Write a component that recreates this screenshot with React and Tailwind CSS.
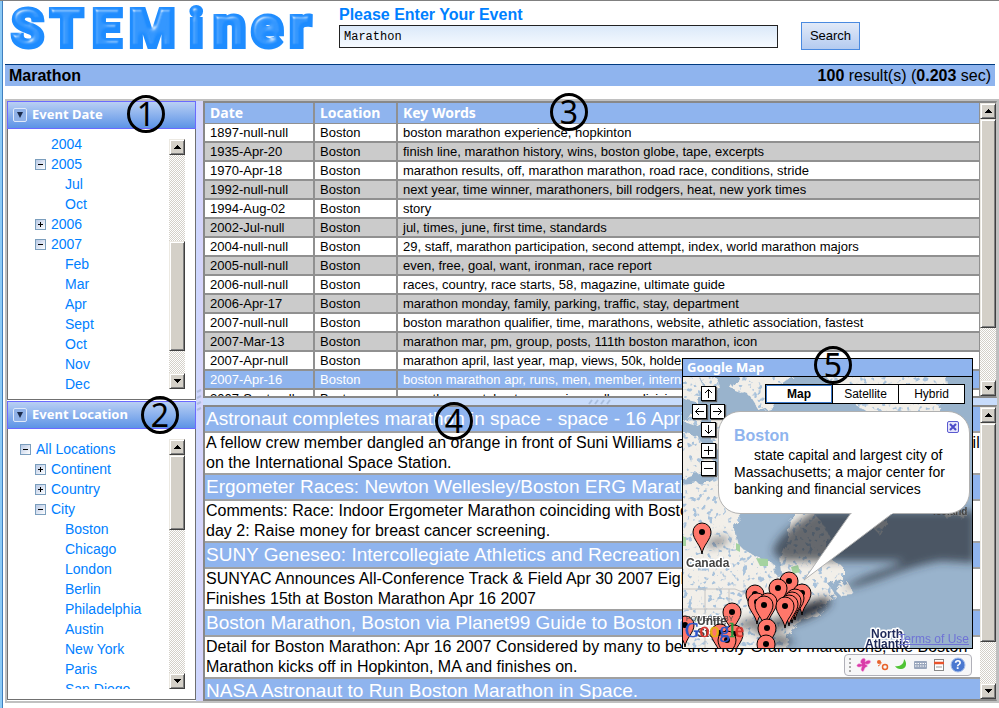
import React from "react";

const rows = [
  ["1897-null-null", "boston marathon experience, hopkinton"],
  ["1935-Apr-20", "finish line, marathon history, wins, boston globe, tape, excerpts"],
  ["1970-Apr-18", "marathon results, off, marathon marathon, road race, conditions, stride"],
  ["1992-null-null", "next year, time winner, marathoners, bill rodgers, heat, new york times"],
  ["1994-Aug-02", "story"],
  ["2002-Jul-null", "jul, times, june, first time, standards"],
  ["2004-null-null", "29, staff, marathon participation, second attempt, index, world marathon majors"],
  ["2005-null-null", "even, free, goal, want, ironman, race report"],
  ["2006-null-null", "races, country, race starts, 58, magazine, ultimate guide"],
  ["2006-Apr-17", "marathon monday, family, parking, traffic, stay, department"],
  ["2007-null-null", "boston marathon qualifier, time, marathons, website, athletic association, fastest"],
  ["2007-Mar-13", "marathon mar, pm, group, posts, 111th boston marathon, icon"],
  ["2007-Apr-null", "marathon april, last year, map, views, 50k, holder"],
  ["2007-Apr-16", "boston marathon apr, runs, men, member, international"],
  ["2007-Sept-null", "marathon sept, boston, running, college, division, head"],
];

const results = [
  ["Astronaut completes marathon in space - space - 16 April", "A fellow crew member dangled an orange in front of Suni Williams as she ran a whole marathon on a treadmill", "on the International Space Station."],
  ["Ergometer Races: Newton Wellesley/Boston ERG Marathon", "Comments: Race: Indoor Ergometer Marathon coinciding with Boston Marathon, held on that very same day", "day 2: Raise money for breast cancer screening."],
  ["SUNY Geneseo: Intercollegiate Athletics and Recreation", "SUNYAC Announces All-Conference Track & Field Apr 30 2007 Eighth", "Finishes 15th at Boston Marathon Apr 16 2007"],
  ["Boston Marathon, Boston via Planet99 Guide to Boston rr", "Detail for Boston Marathon: Apr 16 2007 Considered by many to be the Holy Grail of marathons, the Boston", "Marathon kicks off in Hopkinton, MA and finishes on."],
  ["NASA Astronaut to Run Boston Marathon in Space.", "", ""],
];

const dates = [
  [1, "2004", ""], [1, "2005", "-"], [2, "Jul"], [2, "Oct"], [1, "2006", "+"], [1, "2007", "-"],
  [2, "Feb"], [2, "Mar"], [2, "Apr"], [2, "Sept"], [2, "Oct"], [2, "Nov"], [2, "Dec"],
];
const places = [
  [0, "All Locations", "-"], [1, "Continent", "+"], [1, "Country", "+"], [1, "City", "-"],
  [2, "Boston"], [2, "Chicago"], [2, "London"], [2, "Berlin"], [2, "Philadelphia"], [2, "Austin"],
  [2, "New York"], [2, "Paris"], [2, "San Diego"],
];

const bevel = "border border-t-[#ece9e2] border-l-[#ece9e2] border-r-[#404040] border-b-[#404040] bg-[#d4d0c8] shadow-[inset_1px_1px_0_#fff,inset_-1px_-1px_0_#808080]";

function ScrollButton({ down }) {
  return (
    <button aria-label={down ? "Scroll down" : "Scroll up"} className={"flex h-4 w-full shrink-0 items-center justify-center " + bevel}>
      <svg width="7" height="4" viewBox="0 0 7 4" shapeRendering="crispEdges">
        <path d={down ? "M0 0H7L3.5 4Z" : "M0 4H7L3.5 0Z"} />
      </svg>
    </button>
  );
}

function ScrollBar({ before, thumb }) {
  return (
    <div className="flex w-4 shrink-0 flex-col bg-[repeating-conic-gradient(#d4d0c8_0_25%,#ffffff_0_50%)] bg-[length:2px_2px]">
      <ScrollButton />
      <div style={{ flexGrow: before }} />
      <div className={bevel} style={{ flexGrow: thumb }} />
      <div style={{ flexGrow: 100 - before - thumb }} />
      <ScrollButton down />
    </div>
  );
}

const indents = ["pl-3", "pl-[27px]", "pl-[57px]"];

function Toggle({ sign }) {
  if (sign === "") return <span className="w-[11px]" />;
  return (
    <button aria-label={sign === "+" ? "Expand" : "Collapse"} className="h-[11px] w-[11px] border border-[#7b9ebd] bg-linear-to-br from-[#b8c8e4] to-white">
      <svg width="9" height="9" viewBox="0 0 9 9" shapeRendering="crispEdges">
        <path d={sign === "+" ? "M2 4.5H7M4.5 2V7" : "M2 4.5H7"} stroke="#000" />
      </svg>
    </button>
  );
}

function TreePanel({ title, items, before, thumb, align }) {
  return (
    <section className="flex min-h-0 flex-1 flex-col">
      <h2 className="flex h-7 shrink-0 items-center gap-[5px] border border-[#6a6aff] bg-linear-to-b from-[#b9cff3] to-[#5c93e6] pl-[5px] font-['Noto_Sans'] text-[13px] font-bold text-white">
        <button aria-label={"Collapse " + title} className="flex h-[14px] w-[14px] items-center justify-center rounded-xs border border-[#dfe9fa] bg-[#8fb1e8]">
          <svg width="6" height="6" viewBox="0 0 6 6"><path d="M0 0H6L3 6Z" fill="#1a2a4a" /></svg>
        </button>
        {title}
      </h2>
      <div className="mb-px flex min-h-0 flex-1 border border-t-0 border-[#707070] bg-white py-[10px] pr-[10px]">
        <ul className={"flex min-h-0 flex-1 flex-col overflow-hidden " + align}>
          {items.map(([level, name, sign], i) => (
            <li key={i} className={"flex h-5 shrink-0 items-center gap-[5px] " + indents[level]}>
              {level < 2 && <Toggle sign={sign} />}
              <a href="#" className="text-sm text-[#0080ff]">{name}</a>
            </li>
          ))}
        </ul>
        <ScrollBar before={before} thumb={thumb} />
      </div>
    </section>
  );
}

function Pin({ x, y }) {
  return (
    <g transform={`translate(${x} ${y})`}>
      <path d="M0 22C-1 13-9 8-9 0A9 9 0 0 1 9 0C9 8 1 13 0 22Z" fill="#ff776b" stroke="#000" />
      <circle r="3" />
    </g>
  );
}

const pins = [
  [19, 155], [106, 204], [95, 211], [72, 217], [119, 216], [74, 225], [85, 225], [81, 228], [112, 221],
  [109, 224], [106, 227], [102, 229], [49, 235], [84, 251], [83, 267], [2, 248], [37, 256], [51, 257], [44, 263],
];

function MapDrawing() {
  return (
    <svg className="block w-full" height="271" viewBox="0 0 289 271" preserveAspectRatio="xMinYMin slice" aria-hidden="true">
      <defs>
        <filter id="soft"><feGaussianBlur stdDeviation="4" /></filter>
        <filter id="rough" x="-5%" y="-5%" width="110%" height="110%" colorInterpolationFilters="sRGB">
          <feTurbulence type="fractalNoise" baseFrequency="0.12" numOctaves="3" seed="4" />
          <feDisplacementMap in="SourceGraphic" scale="9" result="land" />
          <feTurbulence type="fractalNoise" baseFrequency="0.2" numOctaves="2" seed="9" />
          <feColorMatrix values="0 0 0 0 0.66  0 0 0 0 0.76  0 0 0 0 0.86  9 0 0 0 -5.2" />
          <feComposite in2="land" operator="in" result="lakes" />
          <feMerge><feMergeNode in="land" /><feMergeNode in="lakes" /></feMerge>
        </filter>
      </defs>
      <rect width="290" height="271" fill="#99b3cc" />
      <g fill="#f2efe9" filter="url(#rough)">
        <path d="M-5 108L22 106L36 98L60 104L84 128L60 136L50 148L55 168L72 180L90 186L94 200L99 196L97 180L104 162L110 136L122 128L140 146L146 160L142 178L160 190L160 203L146 208L152 218L144 228L132 238L114 248L105 260L104 276H-5Z" />
        <path d="M-5 55L14 58L22 72L34 86L30 94L12 98L-5 104Z" />
        <path d="M-5 -5H14L24 16L12 24L-5 20Z" />
        <path d="M14 -5H30L36 10L24 12Z" />
        <path d="M28 34L40 42L46 62L38 78L28 62Z" />
        <path d="M8 36L20 44L14 50L2 46Z" />
        <path d="M58 -5H118L96 10L90 30L76 34L66 18L48 12Z" />
        <path d="M140 -5H262L266 20L252 40L200 44L160 20Z" />
        <path d="M186 130L206 134L202 148L196 158L188 146Z" />
        <path d="M156 208L164 204L172 218L158 219L152 213Z" />
        <path d="M258 134H286V139L262 140Z" />
      </g>
      <g fill="#a5d3a0">
        <path d="M53 166l4 2v7l-4-2zM73 181l12 1v7h-8zM0 159l3 2v8h-3zM108 190l7-2 2 7-7 2zM12 240h5v5h-5z" />
      </g>
      <path d="M0 212H52L64 217M0 232H60M22 212V271M46 212V250M94 200L100 232" fill="none" stroke="#c4c4c4" />
      <path d="M58 214l12-3 8 6-8 3zM96 230l14-6 3 3-12 6z" fill="#99b3cc" />
      <g fill="#2a2f38" filter="url(#soft)">
        <path d="M90 176C92 160 112 146 132 134H292V186L258 184C220 190 190 208 160 212C180 196 210 192 220 184H100Z" opacity="0.7" />
        <ellipse cx="34" cy="165" rx="12" ry="3" opacity="0.7" transform="rotate(-15 34 165)" />
        <ellipse cx="92" cy="248" rx="22" ry="6" opacity="0.7" transform="rotate(-18 92 248)" />
        <ellipse cx="124" cy="234" rx="26" ry="7" opacity="1" transform="rotate(-25 124 234)" />
        <ellipse cx="68" cy="246" rx="14" ry="4" opacity="0.7" transform="rotate(-15 68 246)" />
        <ellipse cx="96" cy="264" rx="14" ry="5" opacity="0.7" />
      </g>
      <g fontFamily="Liberation Sans" fontWeight="bold" stroke="#fff" strokeWidth="3" paintOrder="stroke" strokeLinejoin="round">
        <text x="3" y="190" fontSize="12" fill="#444">Canada</text>
        <text x="14" y="248" fontSize="12" fill="#444">United</text>
        <text x="14" y="260" fontSize="12" fill="#444">States</text>
        <text x="204" y="261" fontSize="12" textAnchor="middle" fill="#1f2a5a">North</text>
        <text x="204" y="271" fontSize="12" textAnchor="middle" fill="#1f2a5a">Atlantic</text>
        <text x="250" y="138" fontSize="10" fill="#444" strokeWidth="0">Iceland</text>
      </g>
      {pins.map(([x, y], i) => <Pin key={i} x={x} y={y} />)}
      <text x="3" y="244" fontFamily="Liberation Sans" fontSize="7" fill="#444">POWERED BY</text>
      <text x="2" y="260" fontFamily="Liberation Serif" fontSize="20" strokeWidth="0.6">
        <tspan fill="#2a56c8" stroke="#2a56c8">G</tspan><tspan fill="#d4322c" stroke="#d4322c">o</tspan><tspan fill="#e5b112" stroke="#e5b112">o</tspan><tspan fill="#2a56c8" stroke="#2a56c8">g</tspan><tspan fill="#2b9a3e" stroke="#2b9a3e">l</tspan><tspan fill="#d4322c" stroke="#d4322c">e</tspan>
      </text>
      <path d="M168 130V136L121 203L210 136V130Z" fill="#fff" />
      <path d="M168 136L121 203L210 136" fill="none" stroke="#b0b0b0" />
    </svg>
  );
}

function MapButton({ label, d }) {
  return (
    <button aria-label={label} className="h-[15px] w-[15px] border border-black bg-white shadow-[1px_1px_1px_#555]">
      <svg width="13" height="13" viewBox="0 0 13 13" fill="none" stroke="#000"><path d={d} /></svg>
    </button>
  );
}

function MapWindow() {
  return (
    <section className="absolute right-[26px] bottom-[59px] w-[291px] border border-black bg-[#8fb4ee]">
      <h2 className="flex h-[18px] items-center border-b border-black pl-1 font-['Noto_Sans'] text-[13px] font-bold text-white">Google Map</h2>
      <div className="relative overflow-hidden">
        <MapDrawing />
        <div className="absolute top-[9px] left-[9px] flex w-[33px] flex-col items-center gap-[3px]">
          <MapButton label="Pan up" d="M6.500 11V2.500M3 6L6.500 2.500L10 6" />
          <div className="flex gap-[3px]">
            <MapButton label="Pan left" d="M11 6.500H2.500M6 3L2.500 6.500L6 10" />
            <MapButton label="Pan right" d="M2 6.500H10.500M7 3L10.500 6.500L7 10" />
          </div>
          <MapButton label="Pan down" d="M6.500 2V10.500M3 7L6.500 10.500L10 7" />
          <div className="flex flex-col gap-[3px] pt-[3px]">
            <MapButton label="Zoom in" d="M2 6.500H11M6.500 2V11" />
            <MapButton label="Zoom out" d="M2 6.500H11" />
          </div>
        </div>
        <div className="absolute top-[7px] right-[7px] grid w-[200px] grid-cols-3 border border-black bg-black text-xs">
          <button className="h-[18px] border border-[#3a78c8] bg-white font-bold">Map</button>
          <button className="ml-px h-[18px] bg-white">Satellite</button>
          <button className="ml-px h-[18px] bg-white">Hybrid</button>
        </div>
        <article className="absolute top-[34px] right-[2px] h-[103px] w-[252px] rounded-[22px] border border-[#b0b0b0] bg-white px-[15px] pt-[15px] text-sm leading-[17px]">
          <button aria-label="Close" className="absolute top-[9px] right-[10px] h-3 w-3 rounded-xs border border-[#5a5ad0] bg-[#e4e4fb]">
            <svg width="10" height="10" viewBox="0 0 10 10"><path d="M2 2L8 8M8 2L2 8" stroke="#4a4ac8" strokeWidth="2" /></svg>
          </button>
          <h3 className="mb-0.5 text-base leading-[18px] font-bold text-[#8fb4ee]">Boston</h3>
          <p className="indent-5">state capital and largest city of Massachusetts; a major center for banking and financial services</p>
        </article>
        <svg className="absolute top-[134px] left-[165px]" width="50" height="6" aria-hidden="true"><path d="M3.500 0H44.500V3H3.500Z" fill="#fff" /></svg>
        <a href="#" className="absolute right-[3px] bottom-[2px] text-xs leading-[14px] text-[#6f73d6] underline">Terms of Use</a>
      </div>
    </section>
  );
}

function LanguageBar() {
  return (
    <div className="absolute right-[27px] bottom-[32px] flex h-[22px] w-32 items-center rounded border border-[#b0b0b8] bg-[#f7f7f8] pl-1">
      <svg width="118" height="18" viewBox="0 0 118 18" aria-hidden="true">
        <path d="M1 2V17" stroke="#aaa" strokeWidth="2" strokeDasharray="2 2" />
        <path d="M13 3c3-2 4 1 3 3 3-3 7-2 5 1-2 2-4 1-5 1 3 1 3 3 1 3-2 1-2 6-4 4-2-1 0-4 0-5-2 2-6 1-5-1 1-2 4-1 5-1-2-1-2-3 0-5z" fill="#d93aa8" stroke="#f3a5dc" strokeWidth=".6" />
        <circle cx="30" cy="6" r="2" fill="#e8632c" /><path d="M32 6c0 2-1 3-3 4" stroke="#e8632c" fill="none" />
        <circle cx="36" cy="11" r="2.500" fill="none" stroke="#e8632c" strokeWidth="1.500" />
        <path d="M55 3c4 4 2 11-4 10-2 0-4-1-5-3 5 1 9-2 9-7z" fill="#4fc434" />
        <rect x="65" y="5" width="13" height="8" rx="1" fill="#9aa7bd" /><path d="M66 7.500H77M66 10H77" stroke="#fff" strokeDasharray="1.500 1" />
        <rect x="85.500" y="3.500" width="9" height="11" fill="#fff" stroke="#888" /><path d="M85 7H95" stroke="#e8532c" strokeWidth="2.500" /><path d="M87 11H93" stroke="#999" />
        <circle cx="109" cy="9" r="7" fill="#4a78d0" stroke="#a9c0ea" />
        <text x="109" y="13" fontSize="12" fontWeight="bold" textAnchor="middle" fill="#fff" fontFamily="Liberation Sans">?</text>
      </svg>
    </div>
  );
}

function Mark({ n, place }) {
  return (
    <span className={"pointer-events-none absolute flex h-[38px] w-[38px] items-center justify-center rounded-full border-3 border-black font-['Noto_Sans'] text-[32px] leading-none text-black " + place}>{n}</span>
  );
}

function Logo() {
  return (
    <svg width="310" height="56" viewBox="0 0 310 56" role="img" aria-label="STEMiner" className="shrink-0">
      <defs>
        <filter id="bevel" x="-5%" y="-10%" width="110%" height="120%" colorInterpolationFilters="sRGB">
          <feGaussianBlur in="SourceAlpha" stdDeviation="2" result="b" />
          <feSpecularLighting in="b" surfaceScale="4" specularConstant="0.7" specularExponent="20" lightingColor="#ffffff" result="s">
            <feDistantLight azimuth="235" elevation="40" />
          </feSpecularLighting>
          <feComposite in="s" in2="SourceAlpha" operator="in" result="s2" />
          <feMerge><feMergeNode in="SourceGraphic" /><feMergeNode in="s2" /></feMerge>
        </filter>
      </defs>
      <g filter="url(#bevel)" fontFamily="Roboto" fontWeight="900" fill="#1e8cff" stroke="#1e8cff" strokeWidth="4" strokeLinejoin="miter">
        <text x="2 41 83 120 180" y="46" fontSize="53">STEMi</text>
        <text x="204 242 280" y="46" fontSize="59">ner</text>
      </g>
    </svg>
  );
}

export default function App() {
  return (
    <div className="relative flex h-screen min-h-[600px] w-full overflow-hidden border-t border-[#808080] bg-white font-['Liberation_Sans',Arial,sans-serif] text-black">
      <div className="w-[3px] shrink-0 border-r border-[#3f7fbf] bg-[#8ccaf6]" />
      <div className="flex min-w-0 flex-1 flex-col pb-[5px] pl-[2px]">
        <header className="flex h-[63px] shrink-0 pl-1">
          <Logo />
          <form className="flex min-w-0 flex-1 items-start gap-[23px] pr-[139px] pl-5" onSubmit={(e) => e.preventDefault()}>
            <div className="min-w-0 flex-1 pt-1">
              <label htmlFor="event" className="block text-base leading-5 font-bold whitespace-nowrap text-[#0080ff]">Please Enter Your Event</label>
              <input id="event" type="text" defaultValue="Marathon" className="block h-[23px] w-full border border-[#222] bg-linear-to-b from-[#dbe9f9] to-[#f6faff] px-1 font-['Liberation_Mono',monospace] text-xs" />
            </div>
            <button className="mt-[21px] h-7 w-[59px] border border-[#4a8ae0] bg-linear-to-b from-[#e2eaf8] to-[#b4cbf0] text-[13px]">Search</button>
          </form>
        </header>
        <div className="mr-1 flex h-[22px] shrink-0 items-center justify-between border-t border-[#003a80] bg-[#8fb4ee] px-1 text-base leading-5">
          <strong>Marathon</strong>
          <span><b>100</b> result(s) (<b>0.203</b> sec)</span>
        </div>
        <main className="mt-[13px] flex min-h-0 flex-1 border-2 border-[#c0c0c0]">
          <aside className="flex w-[189px] shrink-0 flex-col">
            <TreePanel title="Event Date" items={dates} before={40} thumb={50} align="justify-center" />
            <TreePanel title="Event Location" items={places} before={0} thumb={34} align="justify-start" />
          </aside>
          <div className="flex w-[7px] shrink-0 items-center bg-linear-to-r from-[#ccd8ff] to-[#d8d4fa]">
            <svg width="7" height="24" aria-hidden="true"><path d="M1 3l4-2M1 9l4-2M1 15l4-2M1 21l4-2" stroke="#b0bde0" strokeWidth="2" /></svg>
          </div>
          <div className="flex min-w-0 flex-1 flex-col">
            <section className="flex min-h-0 flex-1 border-2 border-r border-[#888] border-r-[#c0c0c0] bg-[#d0d0d0]">
              <div className="min-w-0 flex-1 overflow-hidden">
                <table className="w-full table-fixed border-separate border-spacing-0 text-left text-[13px] whitespace-nowrap">
                  <colgroup><col className="w-[110px]" /><col className="w-[83px]" /><col /></colgroup>
                  <thead>
                    <tr className="h-[21px] bg-[#8fb4ee] font-['Noto_Sans'] text-sm leading-4 text-white">
                      {["Date", "Location", "Key Words"].map((h) => (
                        <th key={h} className="border-r-2 border-b border-[#909090] py-0 pl-[5px] font-bold last:border-r">{h}</th>
                      ))}
                    </tr>
                  </thead>
                  <tbody>
                    {rows.map(([date, words], i) => (
                      <tr key={i} className={"h-[19px] leading-4 " + (i === 13 ? "bg-[#8fb4ee] text-white" : i % 2 ? "bg-[#cbcbcb]" : "bg-white")}>
                        <td className="overflow-hidden border-r-2 border-b-2 border-[#909090] py-0 pl-[5px]">{date}</td>
                        <td className="overflow-hidden border-r-2 border-b-2 border-[#909090] py-0 pl-[5px]">Boston</td>
                        <td className="overflow-hidden border-r border-b-2 border-[#909090] py-0 pl-[5px]">{words}</td>
                      </tr>
                    ))}
                  </tbody>
                </table>
              </div>
              <ScrollBar before={0} thumb={80} />
            </section>
            <div className="flex h-[7px] shrink-0 justify-center bg-[#c8dcfb]">
              <svg width="24" height="7" aria-hidden="true"><path d="M1 6l3-4M7 6l3-4M13 6l3-4M19 6l3-4" stroke="#a9bfe0" strokeWidth="2" /></svg>
            </div>
            <section className="flex min-h-0 flex-1 border-2 border-r border-[#888] border-r-[#c0c0c0] bg-white">
              <div className="min-w-0 flex-1 overflow-hidden">
                {results.map(([title, a, b]) => (
                  <article key={title} className="whitespace-nowrap">
                    <h3 className="h-[26px] border-b-2 border-[#a0a0a0] bg-[#8fb4ee] pl-px text-[19px] leading-6 text-white">{title}</h3>
                    <p className="h-[42px] border-b-2 border-[#a0a0a0] pl-px text-base leading-5">{a}<br />{b}</p>
                  </article>
                ))}
              </div>
              <ScrollBar before={0} thumb={84} />
            </section>
          </div>
        </main>
      </div>
      <MapWindow />
      <LanguageBar />
      <Mark n="1" place="top-[94px] left-[127px]" />
      <Mark n="2" place="top-[395px] left-[141px]" />
      <Mark n="3" place="top-[92px] left-[550px]" />
      <Mark n="4" place="top-[401px] left-[435px]" />
      <Mark n="5" place="top-[345px] left-[814px]" />
    </div>
  );
}
